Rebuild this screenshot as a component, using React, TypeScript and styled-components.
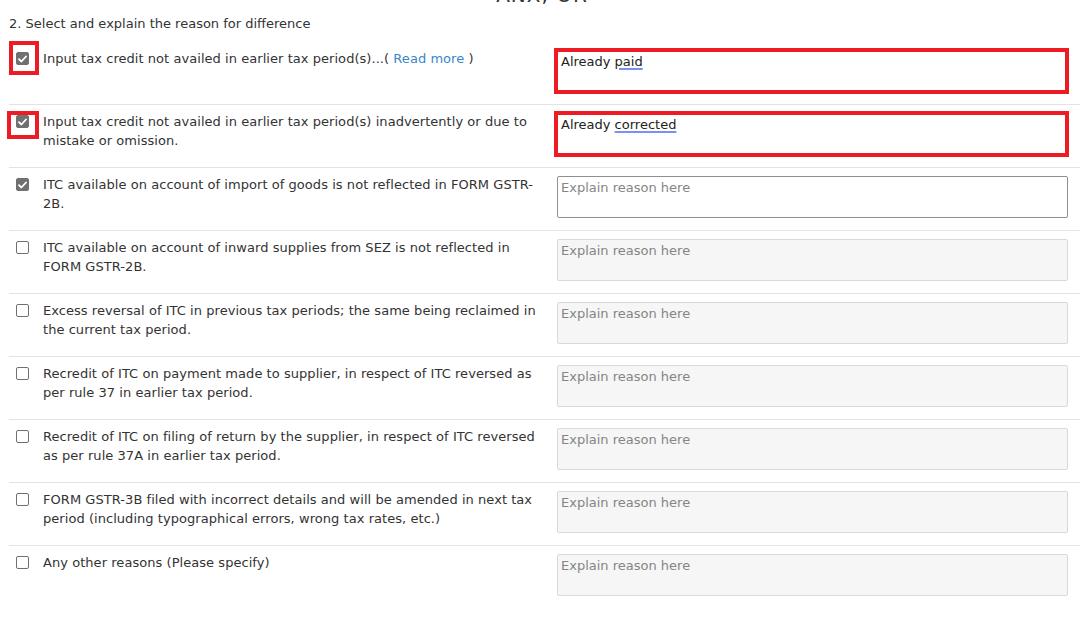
import React from 'react';
import styled, { createGlobalStyle } from 'styled-components';

const GlobalStyle = createGlobalStyle`
  html, body {
    margin: 0;
    padding: 0;
    background: #fff;
    overflow: hidden;
  }
  body {
    font-family: "DejaVu Sans", Verdana, sans-serif;
    color: #333;
  }
`;

const Page = styled.div`
  width: 1084px;
  height: 626px;
  overflow: hidden;
`;

const Title = styled.h3`
  margin: -17px 0 0;
  height: 24px;
  font-size: 20px;
  line-height: 24px;
  font-weight: normal;
  text-align: center;
  letter-spacing: 1px;
  color: #333;
`;

const Section = styled.div`
  padding: 0 4px 0 9px;
`;

const Heading = styled.p`
  margin: 7px 0 9px;
  font-size: 13px;
  line-height: 19px;
  white-space: nowrap;
`;

const Row = styled.div<{ $last?: boolean }>`
  display: grid;
  grid-template-columns: 34px 500px 525px;
  padding: 8px 12px 12px 0;
  border-bottom: ${(p) => (p.$last ? 'none' : '1px solid #e3e3e3')};
`;

const CheckCell = styled.div`
  position: relative;
  padding: 2px 0 0 7px;
`;

const Box = styled.span<{ $checked?: boolean }>`
  display: flex;
  align-items: center;
  justify-content: center;
  width: 13px;
  height: 13px;
  box-sizing: border-box;
  border-radius: 2px;
  background: ${(p) => (p.$checked ? '#707070' : '#fff')};
  border: 1px solid #707070;
`;

const Marker = styled.span<{ $top: number; $left: number; $w: number; $h: number }>`
  position: absolute;
  top: ${(p) => p.$top}px;
  left: ${(p) => p.$left}px;
  width: ${(p) => p.$w}px;
  height: ${(p) => p.$h}px;
  box-sizing: border-box;
  border: 4px solid #ed1c24;
`;

const Label = styled.div`
  font-size: 13px;
  line-height: 19px;
  letter-spacing: 0.05px;
  white-space: nowrap;
  margin-top: -1px;
`;

const ReadMore = styled.a`
  color: #3a87c8;
  text-decoration: none;
  cursor: pointer;
`;

const FieldCell = styled.div`
  position: relative;
  margin-left: 14px;
`;

const Field = styled.div<{ $disabled?: boolean }>`
  height: 42px;
  box-sizing: border-box;
  padding: 1px 3px;
  font-size: 13px;
  line-height: 19px;
  color: #222;
  border: 1px solid ${(p) => (p.$disabled ? '#d9d9d9' : '#8f8f8f')};
  border-radius: 2px;
  background: ${(p) => (p.$disabled ? '#f6f6f6' : '#fff')};
`;

const Placeholder = styled.span`
  color: #858585;
`;

const Spelled = styled.span`
  text-decoration: underline;
  text-decoration-color: #7d8ff0;
  text-decoration-thickness: 2px;
  text-underline-offset: 2px;
`;

const FieldMarker = styled.span`
  position: absolute;
  top: -2px;
  left: -3px;
  right: -1px;
  bottom: -2px;
  border: 4px solid #ed1c24;
  pointer-events: none;
`;

type Reason = {
  lines: React.ReactNode[];
  checked?: boolean;
  value?: [string, string];
  marker?: { top: number; left: number; w: number; h: number };
};

const reasons: Reason[] = [
  {
    lines: [
      <>
        Input tax credit not availed in earlier tax period(s)...( <ReadMore>Read more</ReadMore> )
      </>,
    ],
    checked: true,
    value: ['Already ', 'paid'],
    marker: { top: -9, left: 0, w: 30, h: 34 },
  },
  {
    lines: [
      'Input tax credit not availed in earlier tax period(s) inadvertently or due to',
      'mistake or omission.',
    ],
    checked: true,
    value: ['Already ', 'corrected'],
    marker: { top: -2, left: -2, w: 32, h: 28 },
  },
  {
    lines: ['ITC available on account of import of goods is not reflected in FORM GSTR-', '2B.'],
    checked: true,
  },
  {
    lines: ['ITC available on account of inward supplies from SEZ is not reflected in', 'FORM GSTR-2B.'],
  },
  {
    lines: [
      'Excess reversal of ITC in previous tax periods; the same being reclaimed in',
      'the current tax period.',
    ],
  },
  {
    lines: [
      'Recredit of ITC on payment made to supplier, in respect of ITC reversed as',
      'per rule 37 in earlier tax period.',
    ],
  },
  {
    lines: [
      'Recredit of ITC on filing of return by the supplier, in respect of ITC reversed',
      'as per rule 37A in earlier tax period.',
    ],
  },
  {
    lines: [
      'FORM GSTR-3B filed with incorrect details and will be amended in next tax',
      'period (including typographical errors, wrong tax rates, etc.)',
    ],
  },
  {
    lines: ['Any other reasons (Please specify)'],
  },
];

const Tick = () => (
  <svg width="9" height="8" viewBox="0 0 9 8">
    <path d="M1 4.2 L3.4 6.5 L8 1.5" fill="none" stroke="#fff" strokeWidth="1.8" strokeLinecap="round" strokeLinejoin="round" />
  </svg>
);

const App: React.FC = () => {
  return (
    <Page>
      <GlobalStyle />
      <Title>ANX, OR</Title>
      <Section>
        <Heading>2. Select and explain the reason for difference</Heading>
        {reasons.map((r, i) => (
          <Row key={i} $last={i === reasons.length - 1}>
            <CheckCell>
              <Box $checked={r.checked}>{r.checked && <Tick />}</Box>
              {r.marker && <Marker $top={r.marker.top} $left={r.marker.left} $w={r.marker.w} $h={r.marker.h} />}
            </CheckCell>
            <Label>
              {r.lines.map((line, j) => (
                <div key={j}>{line}</div>
              ))}
            </Label>
            <FieldCell>
              <Field $disabled={!r.checked}>
                {r.value ? (
                  <>
                    {r.value[0]}
                    <Spelled>{r.value[1]}</Spelled>
                  </>
                ) : (
                  <Placeholder>Explain reason here</Placeholder>
                )}
              </Field>
              {r.value && <FieldMarker />}
            </FieldCell>
          </Row>
        ))}
      </Section>
    </Page>
  );
};

export default App;
